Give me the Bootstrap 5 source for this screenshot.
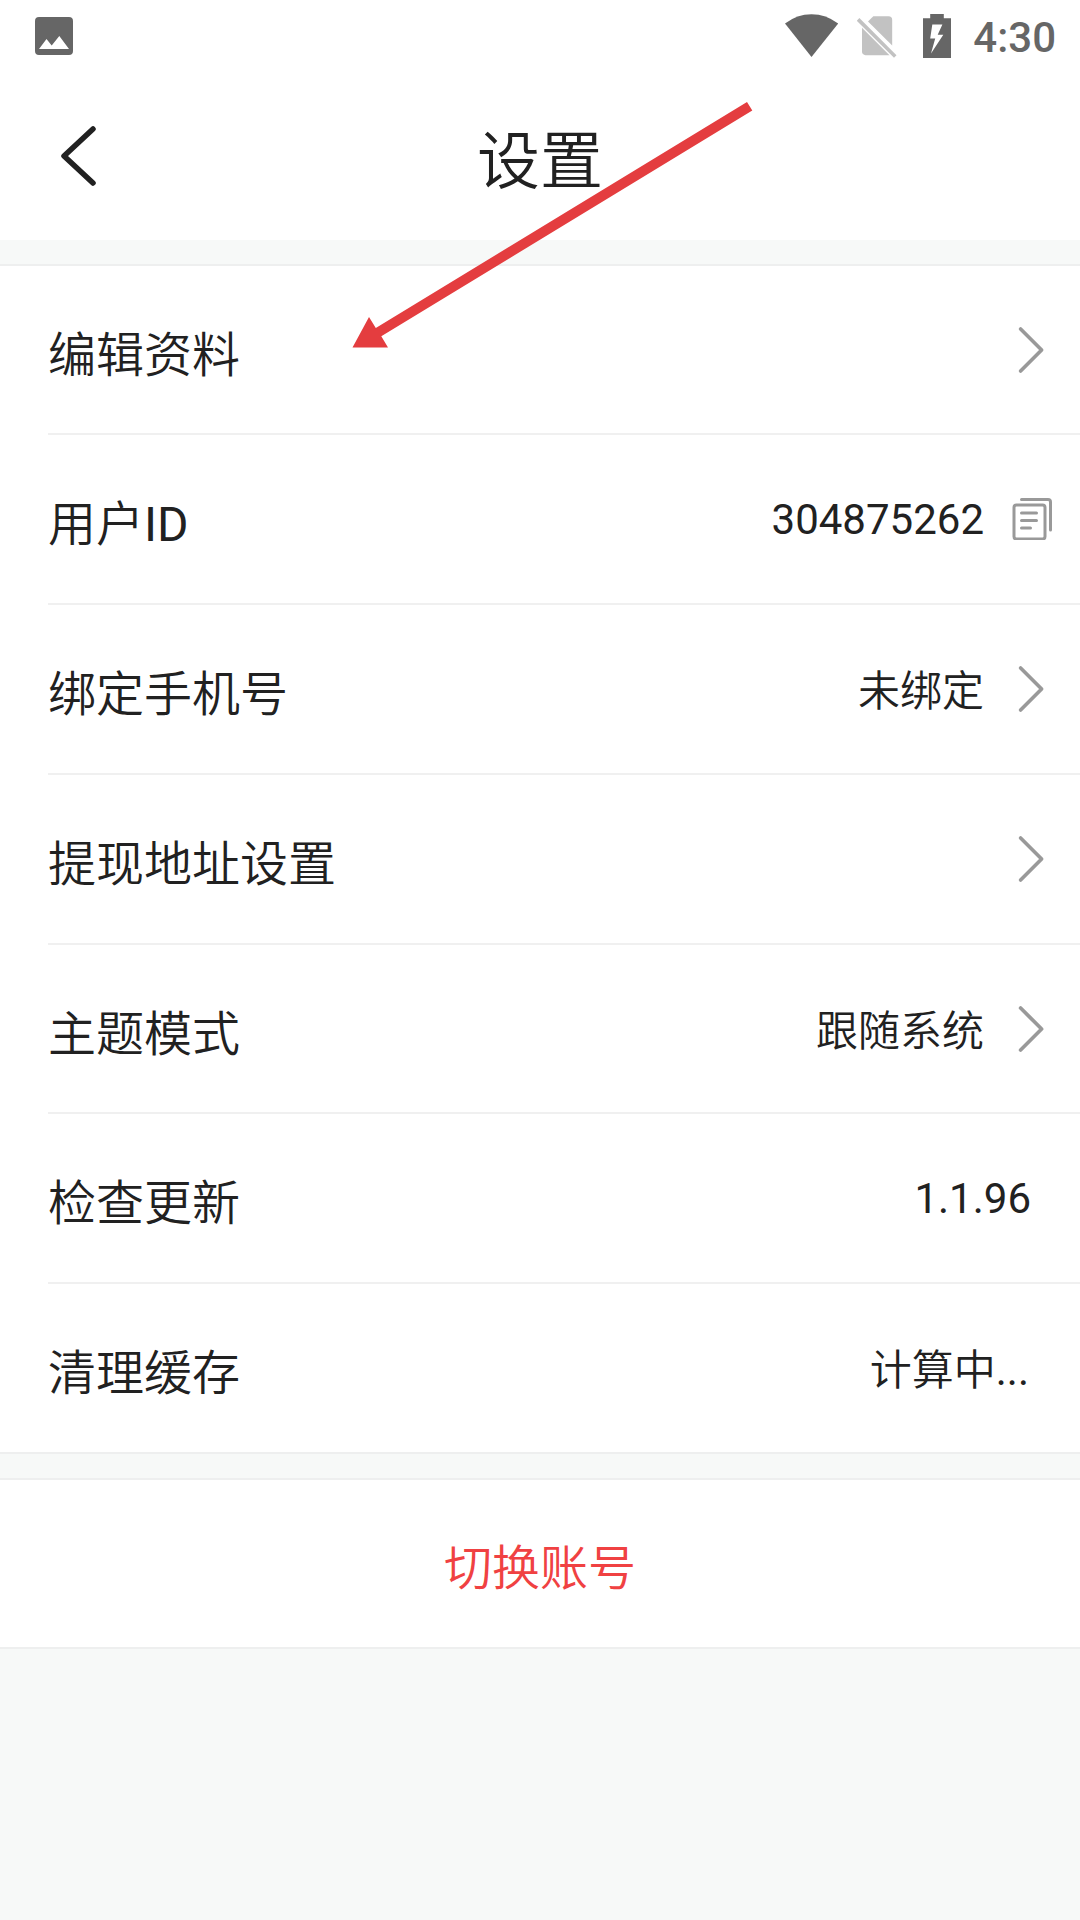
<!DOCTYPE html>
<html lang="zh-CN">
<head>
<meta charset="utf-8">
<meta name="viewport" content="width=device-width, initial-scale=1">
<title>设置</title>
<link rel="stylesheet" href="https://cdn.jsdelivr.net/npm/bootstrap@5.3.0/dist/css/bootstrap.min.css">
<style>
  body { background: #f7f9f8; color: #212121; font-family: Roboto, "Noto Sans CJK SC", sans-serif; min-height: 1920px; overflow: hidden; }
  svg { display: block; flex: none; }
  .statusbar { height: 72px; padding: 14px 24px 0 35px; color: #666; }
  .photo-icon { margin-top: 3px; }
  .sim-icon { margin-left: 18px; }
  .battery-icon { margin-left: 26px; }
  .clock { margin-left: 22px; font-size: 42px; font-weight: 500; line-height: 46px; padding-top: 1px; }
  .titlebar { height: 168px; padding: 0 60px; }
  .page-title { font-size: 63px; line-height: 90px; padding-top: 11px; font-weight: 350; }
  .side { width: 37px; }
  .settings { margin-top: 24px; border-top: 2px solid #eeefef; border-bottom: 2px solid #eeefef; }
  .setting { height: 169.8px; margin-left: 48px; padding-right: 35px; border-bottom: 2px solid #f0f0f0; }
  .setting:first-child { height: 169.300px; }
  .setting:last-child { height: 167.400px; border-bottom: 0; }
  .setting-label { font-size: 48px; line-height: 70px; padding-top: 12px; font-weight: 350; }
  .setting-label b { font-weight: 400; }
  .setting-value { font-size: 42px; line-height: 62px; padding-top: 6px; font-weight: 350; }
  .digits { font-weight: 400; padding-top: 2px; }
  .plain { margin-right: 14px; }
  .pending { margin-right: 16px; }
  .chevron { margin-left: 26px; margin-right: -7px; }
  .copy-icon { margin-left: 28px; margin-right: -7px; }
  .switch-account { height: 171px; margin-top: 24px; border-top: 2px solid #eeefef; border-bottom: 2px solid #eeefef; color: #f04142; }
  .pointer { left: 352px; top: 100px; }
</style>
</head>
<body class="position-relative">
  <div class="statusbar bg-white d-flex justify-content-between align-items-start">
    <svg class="photo-icon" width="38" height="38" viewBox="0 0 38 38"><path fill="#666" fill-rule="evenodd" d="M4 0h30a4 4 0 0 1 4 4v30a4 4 0 0 1-4 4H4a4 4 0 0 1-4-4V4a4 4 0 0 1 4-4ZM4 32h30L24.300 19 16.700 28.500 11.500 22Z"/></svg>
    <div class="d-flex align-items-start">
      <svg width="54" height="44" viewBox="0 0 54 44"><path fill="#666" d="M0 9.500Q12 .2 26.500 .2T53.200 9.500L26.500 43Z"/></svg>
      <svg class="sim-icon" width="40" height="45" viewBox="0 0 40 45"><g fill="#c2c2c2"><path d="M11 7.500 16.300 2.200H31.500a3.700 3.700 0 0 1 3.700 3.700V31.500Z"/><path d="M5 13.700 32.500 41.200H8.500A3.500 3.500 0 0 1 5 37.500Z"/><path d="M2.400 4 39.500 41.300 37 43.800-.2 6.700Z"/></g></svg>
      <svg class="battery-icon" width="28" height="44" viewBox="0 0 28 44"><path fill="#666" fill-rule="evenodd" d="M7.200 0h13.600v4.300H28V44H0V4.300h7.200ZM9.300 10.600 7.200 24.400h5L8 39.500 20.300 20.800h-5.600L19.400 10.600Z"/></svg>
      <span class="clock">4:30</span>
    </div>
  </div>

  <header class="titlebar bg-white d-flex justify-content-between align-items-center">
    <svg class="side" width="37" height="60" viewBox="0 0 37 60"><path d="M33 3 4 30 33 57" fill="none" stroke="#212121" stroke-width="5.500" stroke-linecap="round" stroke-linejoin="round"/></svg>
    <h1 class="page-title m-0">设置</h1>
    <span class="side"></span>
  </header>

  <svg width="0" height="0" class="position-absolute"><defs>
    <symbol id="chev" viewBox="0 0 42 48"><path d="M10.600 3 31.600 24 10.600 45" fill="none" stroke="#999" stroke-width="3.700" stroke-linecap="round" stroke-linejoin="round"/></symbol>
  </defs></svg>

  <main>
    <div class="settings bg-white">
      <div class="setting d-flex align-items-center"><span class="setting-label me-auto">编辑资料</span><svg class="chevron" width="42" height="48"><use href="#chev"/></svg></div>
      <div class="setting d-flex align-items-center"><span class="setting-label me-auto">用户<b>ID</b></span><span class="setting-value digits">304875262</span>
        <svg class="copy-icon" width="40" height="42" viewBox="0 0 40 42"><g fill="none" stroke="#999" stroke-width="3" stroke-linecap="round"><rect x="2" y="7" width="31" height="34" rx="2.500"/><path d="M9.500 1.500H36a2.500 2.500 0 0 1 2.500 2.500V32M9.500 15H24.500M9.500 22.500H24.500M9.500 30H18.500"/></g></svg></div>
      <div class="setting d-flex align-items-center"><span class="setting-label me-auto">绑定手机号</span><span class="setting-value">未绑定</span><svg class="chevron" width="42" height="48"><use href="#chev"/></svg></div>
      <div class="setting d-flex align-items-center"><span class="setting-label me-auto">提现地址设置</span><svg class="chevron" width="42" height="48"><use href="#chev"/></svg></div>
      <div class="setting d-flex align-items-center"><span class="setting-label me-auto">主题模式</span><span class="setting-value">跟随系统</span><svg class="chevron" width="42" height="48"><use href="#chev"/></svg></div>
      <div class="setting d-flex align-items-center"><span class="setting-label me-auto">检查更新</span><span class="setting-value digits plain">1.1.96</span></div>
      <div class="setting d-flex align-items-center"><span class="setting-label me-auto">清理缓存</span><span class="setting-value pending">计算中<span class="fw-normal">...</span></span></div>
    </div>
    <div class="switch-account bg-white d-flex justify-content-center align-items-center"><span class="setting-label">切换账号</span></div>
  </main>

  <svg class="pointer position-absolute" width="402" height="250" viewBox="352 100 402 250"><path fill="#e43d3f" d="M747 102 752.300 110.500 381.300 336.300 388 347.500H352.500L369 317 375.800 328Z"/></svg>
<script src="https://cdn.jsdelivr.net/npm/bootstrap@5.3.0/dist/js/bootstrap.bundle.min.js"></script>
</body>
</html>
